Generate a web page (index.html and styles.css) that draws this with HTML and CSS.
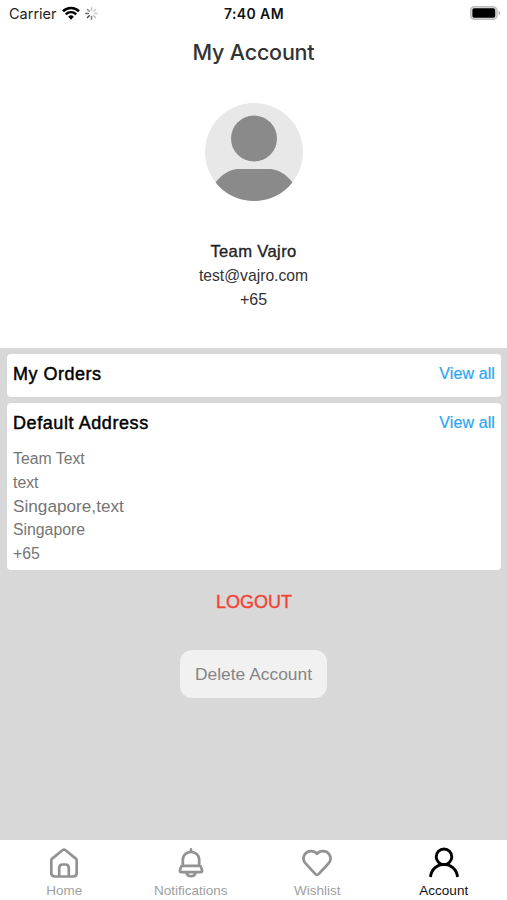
FILE: index.html
```html
<!DOCTYPE html>
<html lang="en">
<head>
<meta charset="utf-8">
<title>My Account</title>
<link rel="stylesheet" href="styles.css">
</head>
<body>
<div class="screen">
  <header class="status">
    <div class="carrier">
      <span>Carrier</span>
      <svg class="wifi" width="18" height="14" viewBox="0 0 18 14"><path d="M1 5.2a11.5 11.5 0 0 1 16 0" fill="none" stroke="#000" stroke-width="2.6"/><path d="M3.800 8.300a7.400 7.400 0 0 1 10.400 0" fill="none" stroke="#000" stroke-width="2.4"/><path d="M6.200 10.700a4 4 0 0 1 5.600 0L9 13.8z"/></svg>
      <svg class="spinner" width="13" height="13" viewBox="-6 -6 12 12" stroke-width="1.3" stroke-linecap="round"><path d="M0-2.8V-5.3" stroke="#bbb"/><path d="M2-2 3.7-3.7" stroke="#ccc"/><path d="M2.8 0H5.3" stroke="#ccc"/><path d="M2 2 3.7 3.7" stroke="#bbb"/><path d="M0 2.8V5.3" stroke="#777"/><path d="M-2 2-3.7 3.7" stroke="#444"/><path d="M-2.8 0H-5.3" stroke="#666"/><path d="M-2-2-3.7-3.7" stroke="#888"/></svg>
    </div>
    <div class="time">7:40 AM</div>
    <svg class="battery" width="32" height="16" viewBox="0 0 32 16"><rect x="1.600" y="1.600" width="26.400" height="12.800" rx="3.800" fill="#d8d8d8" stroke="#bcbcbc" stroke-width="1.300"/><rect x="3.400" y="3.200" width="22.800" height="9.600" rx="1.800"/><path d="M29.600 5.500c2 .7 2 4.100 0 4.800z" fill="#b0b0b0"/></svg>
  </header>
  <h1 class="title">My Account</h1>
  <section class="profile">
    <svg class="avatar" width="98" height="98" viewBox="0 0 98 98"><defs><clipPath id="disc"><circle cx="49" cy="49" r="49"/></clipPath></defs><circle cx="49" cy="49" r="49" fill="#e8e8e8"/><g fill="#8a8a8a" clip-path="url(#disc)"><circle cx="49" cy="35.600" r="23"/><path d="M5 90C10 76 22 66 34 66h30c12 0 24 10 29 24v10H5z"/></g></svg>
    <div class="name">Team Vajro</div>
    <div class="email">test@vajro.com</div>
    <div class="phone">+65</div>
  </section>
  <main class="content">
    <section class="card orders">
      <div class="card-head"><h2>My Orders</h2><a>View all</a></div>
    </section>
    <section class="card address">
      <div class="card-head"><h2 class="wide">Default Address</h2><a>View all</a></div>
      <div class="lines">
        <div>Team Text</div>
        <div>text</div>
        <div class="city">Singapore,text</div>
        <div>Singapore</div>
        <div>+65</div>
      </div>
    </section>
    <div class="logout">LOGOUT</div>
    <div class="delete">Delete Account</div>
  </main>
  <nav class="tabs">
    <div class="tab">
      <svg width="32" height="32" viewBox="0 0 32 32"><path d="M4.200 11.600 14.400 3.300q1.600-1.300 3.200 0L27.800 11.600q.9.800.9 2V26q0 3.500-3.500 3.500H6.800Q3.300 29.500 3.300 26V13.600q0-1.200.9-2zM11.200 29.500V21q0-3.500 3.500-3.500h2.600q3.500 0 3.500 3.500v8.500"/></svg>
      <span>Home</span>
    </div>
    <div class="tab">
      <svg width="32" height="32" viewBox="0 0 32 32"><path d="M16 2.300v2.700M7.800 18.800V13c0-10.700 16.400-10.700 16.400 0v5.800M7.500 18.800h17q1.300 0 1.600 1.200l.9 3.200q.5 2-1.500 2H6.500q-2 0-1.500-2l.9-3.200q.3-1.200 1.600-1.200zM11.300 25.200c1 5.200 8.400 5.200 9.400 0"/></svg>
      <span>Notifications</span>
    </div>
    <div class="tab">
      <svg width="32" height="32" viewBox="0 0 32 32"><path d="M16 6.800C19 3.200 25.500 3.200 28.300 7.500c2 3.200 1.300 6.700-1.100 9.200L17.800 26.900q-1.800 1.900-3.600 0L4.800 16.700C2.400 14.200 1.700 10.700 3.700 7.500 6.500 3.200 13 3.200 16 6.800z"/></svg>
      <span>Wishlist</span>
    </div>
    <div class="tab active">
      <svg width="32" height="32" viewBox="0 0 32 32"><circle cx="16" cy="9.800" r="7.800"/><path d="M2.500 30C4 13.200 28 13.200 29.500 30"/></svg>
      <span>Account</span>
    </div>
  </nav>
</div>
</body>
</html>
```
FILE: styles.css
```css
* { box-sizing: border-box; }
body { margin: 0; background: #fff; font-family: "Liberation Sans", Arial, sans-serif; }
h1, h2 { margin: 0; font-weight: 400; }
svg { display: block; flex: none; }
.screen { width: 507px; height: 900px; display: flex; flex-direction: column; overflow: hidden; }
.status { height: 27px; display: grid; grid-template-columns: 1fr auto 1fr; align-items: center; padding: 0 6px 0 9px; font-family: Inter, sans-serif; font-size: 14.500px; color: #222; }
.carrier { display: flex; align-items: center; }
.wifi { margin-left: 5px; margin-top: -1px; }
.spinner { margin-left: 5px; }
.time { font-weight: 600; font-size: 14px; letter-spacing: .4px; color: #111; margin-left: -2px; }
.battery { justify-self: end; margin-top: -1px; }
.title { height: 49px; line-height: 50px; text-align: center; font-family: Inter, sans-serif; font-weight: 500; font-size: 21.500px; letter-spacing: -.2px; color: #333; }
.profile { height: 272px; padding-top: 27px; display: flex; flex-direction: column; align-items: center; font-size: 15.700px; line-height: 24px; color: #333; }
.avatar { margin-bottom: 39px; }
.name { font-size: 16.600px; height: 24px; letter-spacing: .35px; color: #222; -webkit-text-stroke: .35px #222; }
.phone { font-size: 16px; }
.content { flex: 1; background: #d8d8d8; padding: 6px 6px 0 7px; display: flex; flex-direction: column; }
.card { background: #fff; border-radius: 4px; padding: 8px 6px 0 6px; }
.orders { height: 43px; margin-bottom: 6px; }
.address { height: 167px; }
.card-head { display: flex; justify-content: space-between; line-height: 24px; }
.card-head h2 { font-size: 18px; letter-spacing: .5px; color: #000; -webkit-text-stroke: .45px #000; }
.card-head .wide { letter-spacing: .58px; }
.card-head a { font-size: 16px; color: #29a5f2; letter-spacing: .1px; -webkit-text-stroke: .2px #29a5f2; }
.lines { margin-top: 12px; font-size: 15.800px; line-height: 23.800px; color: #757575; }
.lines .city { font-size: 17.200px; }
.logout { margin-top: 20px; line-height: 24px; text-align: center; font-size: 18px; color: #f44336; -webkit-text-stroke: .4px #f44336; }
.delete { align-self: center; margin-top: 36px; margin-right: 1px; width: 147px; height: 48px; line-height: 49px; border-radius: 12px; background: #f1f1f1; color: #858585; text-align: center; font-size: 17.400px; }
.tabs { height: 60px; padding: 7px 0 0 1px; display: grid; grid-template-columns: repeat(4, 1fr); background: #fff; }
.tab { display: flex; flex-direction: column; align-items: center; font-size: 13.500px; line-height: 16px; color: #a0a0a0; }
.tab svg { fill: none; stroke: #929292; stroke-width: 2.700; stroke-linejoin: round; stroke-linecap: round; margin-bottom: 4px; }
.tab.active { color: #111; }
.tab.active svg { stroke: #000; stroke-width: 2.900; stroke-linecap: butt; }
```
